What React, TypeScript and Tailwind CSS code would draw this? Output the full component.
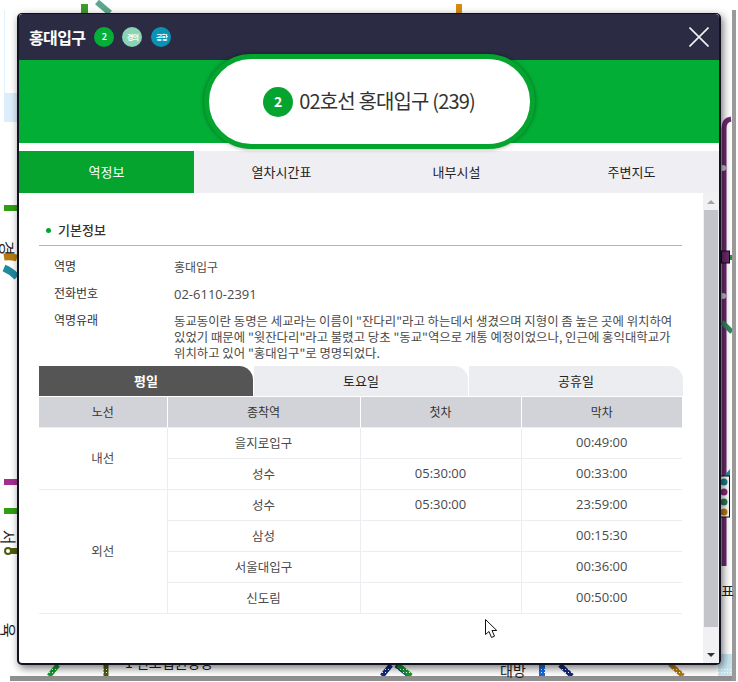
import React from 'react';

const FONT = "font-['Noto_Sans_CJK_KR','Noto_Sans',sans-serif]";
const DIGITS = "font-['Open_Sans','Noto_Sans_CJK_KR',sans-serif]";

const tabs = ['역정보', '열차시간표', '내부시설', '주변지도'];
const dayTabs = ['평일', '토요일', '공휴일'];

const inner = [
  { station: '을지로입구', first: '', last: '00:49:00' },
  { station: '성수', first: '05:30:00', last: '00:33:00' },
];
const outer = [
  { station: '성수', first: '05:30:00', last: '23:59:00' },
  { station: '삼성', first: '', last: '00:15:30' },
  { station: '서울대입구', first: '', last: '00:36:00' },
  { station: '신도림', first: '', last: '00:50:00' },
];

// map fragments that stick out around the popup
const MapBehind: React.FC = () => (
  <>
    <svg className="absolute inset-0" width="738" height="682" viewBox="0 0 738 682">
      <rect x="4" y="10" width="1" height="83" fill="#dff3fb" />
      <rect x="4" y="93" width="13" height="29" fill="#dcedfb" />
      <rect x="81" y="4" width="7" height="9" fill="#3f9a2c" />
      <path d="M97 2 L110 13" stroke="#5fa58e" strokeWidth="6" />
      <rect x="456" y="4" width="6" height="9" fill="#d98a10" />
      <rect x="4" y="205" width="13" height="6" fill="#2f9e12" />
      <path d="M4 257 Q10 256 17 258" stroke="#b57a12" strokeWidth="7" fill="none" />
      <path d="M4 268 Q11 271 17 277" stroke="#1f8a9e" strokeWidth="7" fill="none" />
      <rect x="4" y="479" width="13" height="6" fill="#a52d8e" />
      <rect x="4" y="508" width="13" height="6" fill="#2f9e12" />
      <rect x="10" y="548" width="7" height="6" fill="#4d5c10" />
      <circle cx="8" cy="551" r="3" fill="#fff" stroke="#4d5c10" strokeWidth="2" />
      <path d="M724 566 L724 128 Q724 120 731 119" stroke="#6e2a70" strokeWidth="5" fill="none" />
      <path d="M722 322 L732 332" stroke="#2f8a5e" strokeWidth="5" />
      <circle cx="723" cy="168" r="3" fill="#c9c3cc" />
      <circle cx="723" cy="296" r="3" fill="#c9c3cc" />
      <rect x="721.5" y="251" width="8" height="12" fill="#6e2a70" stroke="#111" />
      <rect x="730" y="255" width="2" height="5" fill="#159a2a" />
      <path d="M730 469 L730 476 L724 476 Z" fill="#1f8a9e" />
      <rect x="720.5" y="476" width="9" height="41" fill="#fff" stroke="#111" />
      <circle cx="724" cy="482" r="3.5" fill="#1d7f88" />
      <circle cx="724" cy="492" r="3.5" fill="#8a2a7a" />
      <circle cx="724" cy="502" r="3.5" fill="#2f7a55" />
      <circle cx="724" cy="512" r="3.5" fill="#c07a10" />
      <path d="M58 665 L49 676" stroke="#159a2a" strokeWidth="5" />
      <path d="M106 665 L106 676" stroke="#4d5c10" strokeWidth="5" />
      <path d="M391 665 L382 676 M396 665 L410 676 M560 665 L572 676" stroke="#122a7a" strokeWidth="5" />
      <path d="M398 665 L411 676" stroke="#159a2a" strokeWidth="5" />
      <rect x="539" y="664" width="6" height="12" fill="#1a6ae0" />
      <path d="M670 664 L683 676" stroke="#b57a12" strokeWidth="5" />
      <rect x="718" y="654" width="14" height="22" fill="#c9e6f0" />
      <rect x="10" y="676" width="726" height="5" fill="#8f8f8f" />
      <rect x="732" y="10" width="4" height="671" fill="#9a9a9a" />
      <path d="M10 669.5 H732 M10 672.5 H732" stroke="#fff" strokeDasharray="1 2" />
    </svg>
    <span className="absolute left-[1px] top-[236px] rotate-90 text-[16px] text-[#222]">경</span>
    <span className="absolute left-[2px] top-[525px] rotate-90 text-[16px] text-[#222]">서</span>
    <span className="absolute left-[2px] top-[618px] rotate-90 text-[16px] text-[#222]">육</span>
    <span className="absolute left-[721px] top-[580px] text-[14px] text-[#222]">표</span>
    <span className="absolute left-[125px] top-[652px] text-[14px] text-[#222]">1 천호법원앙앙</span>
    <span className="absolute left-[500px] top-[660px] text-[14px] text-[#222]">대방</span>
  </>
);

const Cursor: React.FC = () => (
  <svg className="absolute left-[484px] top-[618px]" width="15" height="22" viewBox="0 0 15 22">
    <path d="M1.5 1.5 L1.5 16.5 L5 13.5 L7.5 19.5 L10.5 18.2 L8 12.5 L12.8 12.5 Z" fill="#fff" stroke="#111" strokeWidth="1" />
  </svg>
);

const Cell: React.FC<{ children?: React.ReactNode; className?: string; rowSpan?: number }> = ({ children, className, rowSpan }) => (
  <td rowSpan={rowSpan} className={`h-[31px] border border-[#ecedf0] p-0 pt-[1px] text-center align-middle text-[12.5px] text-[#4a4a4a] first:border-l-0 last:border-r-0 ${className ?? ''}`}>
    {children}
  </td>
);

const Time: React.FC<{ value: string }> = ({ value }) => (
  <Cell className={`${DIGITS} text-[13px]`}>{value}</Cell>
);

const App: React.FC = () => {
  return (
    <div className={`relative h-[682px] w-[738px] overflow-hidden bg-white ${FONT}`}>
      <MapBehind />
      <div className="absolute left-[17px] top-[13px] flex h-[652px] w-[704px] flex-col rounded-[5px] border-x-2 border-b-2 border-t border-[#10121f] border-t-[#111] bg-white shadow-[2px_3px_8px_rgba(0,0,0,0.55)]">
        <div className="flex h-[46px] shrink-0 items-center gap-2 rounded-t-[4px] bg-[#2b2c43] pl-[10px] pr-[10px]">
          <span className="text-[16px] font-bold tracking-[-0.6px] text-white">홍대입구</span>
          <span className="ml-[1px] flex h-5 w-5 items-center justify-center rounded-full bg-[#05ae35] text-[9px] font-bold text-white">2</span>
          <span className="flex h-5 w-5 items-center justify-center rounded-full bg-[#8ad3b6] text-[7px] font-bold tracking-[-1px] text-white">경의</span>
          <span className="ml-[1px] flex h-5 w-5 items-center justify-center rounded-full bg-[#0a93b5] text-[7px] font-bold tracking-[-1px] text-white">공항</span>
          <svg className="ml-auto" width="20" height="20" viewBox="0 0 20 20">
            <path d="M0.5 0.5 L19.5 19.5 M19.5 0.5 L0.5 19.5" stroke="#f2f2f2" strokeWidth="1.6" />
          </svg>
        </div>

        <div className="flex h-[83px] shrink-0 items-center justify-center bg-[#03ae37]">
          <div className="relative z-10 flex h-[95px] w-[331px] shrink-0 items-center justify-center gap-[6px] rounded-full border-[5px] border-[#05a42f] bg-white shadow-[0_0_4px_rgba(0,0,0,0.4)]">
            <span className="flex h-[30px] w-[30px] items-center justify-center rounded-full bg-[#05a42f] text-[14px] font-bold text-white">2</span>
            <span className="mb-[1px] text-[20px] tracking-[-0.85px] text-[#333]">02호선 홍대입구 (239)</span>
          </div>
        </div>

        <div className="h-2 shrink-0 bg-white" />

        <div className="grid h-[42px] shrink-0 grid-cols-4 bg-[#efeef2]">
          {tabs.map((tab, i) => (
            <div key={tab} className={`flex items-center justify-center text-[13px] ${i === 0 ? 'bg-[#05a42f] text-white' : 'text-[#222]'}`}>
              {tab}
            </div>
          ))}
        </div>

        <div className="flex min-h-0 flex-1">
          <div className="min-w-0 flex-1 pl-5 pr-[21px] pt-[27px]">
            <div className="flex h-[26px] items-center gap-[7px] border-b border-[#b4b4b4] pb-[5px] pl-[7px]">
              <span className="h-[5px] w-[5px] rounded-full bg-[#05a42f]" />
              <span className="text-[13px] font-medium text-[#333]">기본정보</span>
            </div>

            <dl className="pl-[15px] pt-[11px] text-[12px] text-[#4a4a4a]">
              <div className="flex h-[27px]">
                <dt className="w-[120px] shrink-0 text-[#333]">역명</dt>
                <dd className="pt-[1px]">홍대입구</dd>
              </div>
              <div className="flex h-[27px]">
                <dt className="w-[120px] shrink-0 text-[#333]">전화번호</dt>
                <dd className={`pt-[1px] text-[13px] leading-[18px] ${DIGITS}`}>02-6110-2391</dd>
              </div>
              <div className="flex">
                <dt className="w-[120px] shrink-0 text-[#333]">역명유래</dt>
                <dd className="whitespace-nowrap pt-[2px] text-[12.4px] leading-[16px]">
                  동교동이란 동명은 세교라는 이름이 "잔다리"라고 하는데서 생겼으며 지형이 좀 높은 곳에 위치하여<br />
                  있었기 때문에 "윗잔다리"라고 불렸고 당초 "동교"역으로 개통 예정이었으나, 인근에 홍익대학교가<br />
                  위치하고 있어 "홍대입구"로 명명되었다.
                </dd>
              </div>
            </dl>

            <div className="-mr-[1px] mt-[5px] grid h-[30px] grid-cols-3 gap-[1px]">
              {dayTabs.map((tab, i) => (
                <div key={tab} className={`flex items-center justify-center rounded-tr-[14px] text-[13px] ${i === 0 ? 'bg-[#555555] font-bold text-white' : 'bg-[#ecedf0] text-[#222]'}`}>
                  {tab}
                </div>
              ))}
            </div>

            <table className="mt-[1px] w-full table-fixed border-collapse">
              <colgroup>
                <col className="w-[128px]" />
                <col className="w-[193px]" />
                <col className="w-[161px]" />
                <col />
              </colgroup>
              <thead>
                <tr className="h-[30px] bg-[#d2d3d8] text-[12px] text-[#333]">
                  {['노선', '종착역', '첫차', '막차'].map((h) => (
                    <th key={h} className="border-x border-white p-0 pt-[1px] font-normal first:border-l-0 last:border-r-0">{h}</th>
                  ))}
                </tr>
              </thead>
              <tbody>
                {inner.map((row, i) => (
                  <tr key={row.station}>
                    {i === 0 && <Cell rowSpan={inner.length}>내선</Cell>}
                    <Cell>{row.station}</Cell>
                    <Time value={row.first} />
                    <Time value={row.last} />
                  </tr>
                ))}
                {outer.map((row, i) => (
                  <tr key={row.station}>
                    {i === 0 && <Cell rowSpan={outer.length}>외선</Cell>}
                    <Cell>{row.station}</Cell>
                    <Time value={row.first} />
                    <Time value={row.last} />
                  </tr>
                ))}
              </tbody>
            </table>
          </div>

          <div className="flex w-4 shrink-0 flex-col items-center bg-[#f1f1f3]">
            <div className="flex h-[17px] w-full items-center justify-center">
              <span className="h-0 w-0 border-x-[4px] border-b-[4px] border-x-transparent border-b-[#a3a3a3]" />
            </div>
            <div className="h-[417px] w-[14px] bg-[#c3c4c9]" />
            <div className="mt-auto flex h-[17px] w-full items-center justify-center">
              <span className="h-0 w-0 border-x-[4px] border-t-[4px] border-x-transparent border-t-[#333]" />
            </div>
          </div>
        </div>
      </div>
      <Cursor />
    </div>
  );
};

export default App;
